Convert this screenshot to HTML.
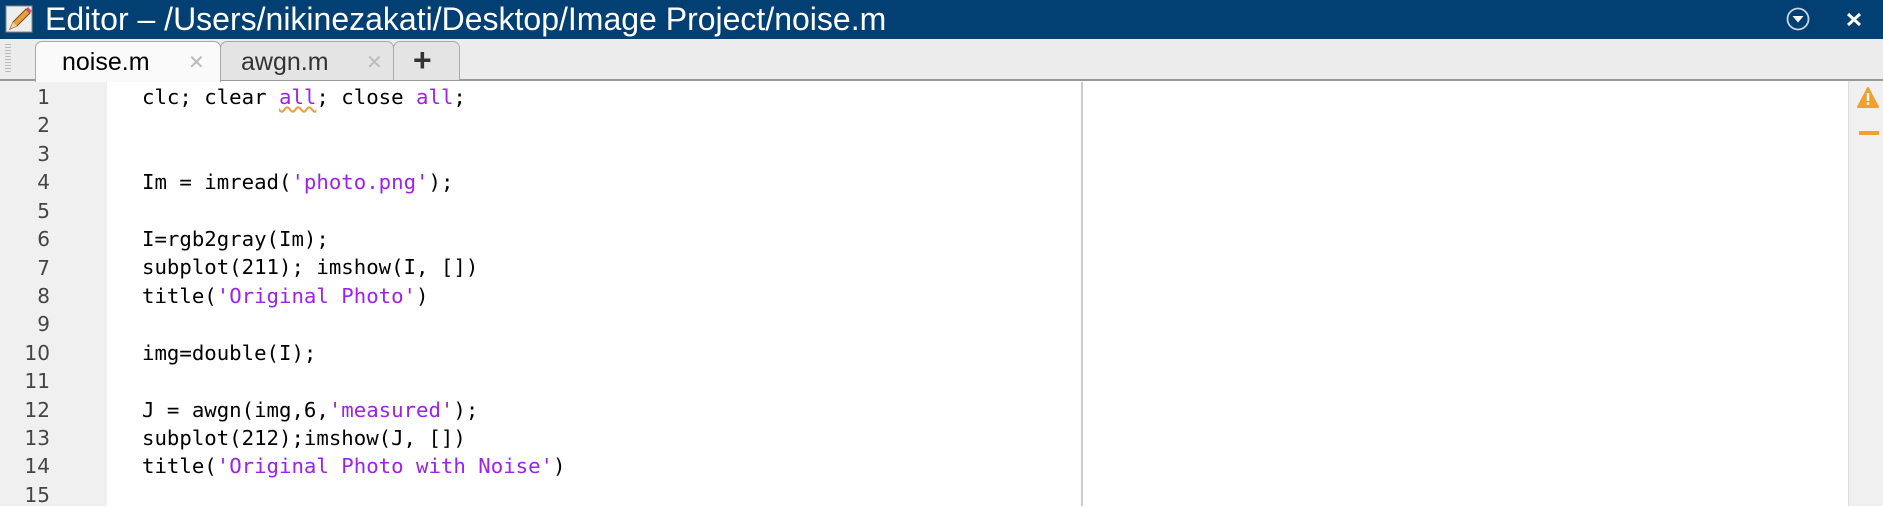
<!DOCTYPE html>
<html><head><meta charset="utf-8"><style>
*{margin:0;padding:0;box-sizing:border-box}
body{width:1883px;height:506px;overflow:hidden;background:#fff;position:relative;font-family:"Liberation Sans",sans-serif}
.title{position:absolute;left:0;top:0;width:1883px;height:39px;background:#023f72;color:#fff;font-size:32px;line-height:39px}
.title span{position:absolute;left:45px;top:0}
.tabbar{position:absolute;left:0;top:39px;width:1883px;height:42px;background:#ececec;border-bottom:2px solid #999}
.grip{position:absolute;left:5px;top:5px;width:6px;height:30px;background:repeating-linear-gradient(#bbb 0 1px,transparent 1px 3px)}
.tab{position:absolute;top:2px;height:39px;border:1px solid #aaa;border-bottom:none;border-radius:7px 7px 0 0;font-size:25px;line-height:36px;background:#e4e4e4;color:#333}
.tab.act{background:#fafafa;color:#000;height:41px;z-index:2}
.tab .x{position:absolute;top:0;color:#bbb;font-size:20px}
.gutter{position:absolute;left:0;top:81px;width:107px;height:425px;background:#f0f0f0}
.ln{position:absolute;left:0;width:50px;text-align:right;font-family:"DejaVu Sans",sans-serif;font-size:20px;color:#444}
.code{position:absolute;left:142px;font-family:"DejaVu Sans Mono",monospace;font-size:20.7px;color:#000;white-space:pre}
.s{color:#a020f0}
.vline{position:absolute;left:1081px;top:82px;width:2px;height:424px;background:#ccc}
.rbar{position:absolute;left:1848px;top:81px;width:35px;height:425px;background:#f0f0f0;border-left:1px solid #ddd}
</style></head><body>
<div class="title">
<svg style="position:absolute;left:5px;top:5px" width="28" height="28" viewBox="0 0 28 28"><rect x="1" y="1" width="26" height="26" fill="#eee" stroke="#888"/><path d="M5 24 L8 17 L21 4 L25 8 L12 21 Z" fill="#e8a040" stroke="#7a4a10"/><path d="M5 24 L8 17 L12 21Z" fill="#f4d0a0"/><path d="M21 4 L25 8 L27 6 L23 2Z" fill="#e05070"/></svg>
<span>Editor – /Users/nikinezakati/Desktop/Image Project/noise.m</span>
<svg style="position:absolute;left:1786px;top:7px" width="24" height="24" viewBox="0 0 24 24"><circle cx="12" cy="12" r="10.5" fill="none" stroke="#c8d4e0" stroke-width="1.8"/><path d="M6.5 9 L17.5 9 L12 15.5Z" fill="#fff"/></svg>
<svg style="position:absolute;left:1846px;top:12px" width="16" height="15" viewBox="0 0 16 15"><path d="M2 2 L14 13 M14 2 L2 13" stroke="#fff" stroke-width="3"/></svg>
</div>
<div class="tabbar">
<div class="grip"></div>
<div class="tab act" style="left:35px;width:186px"><span style="position:absolute;left:26px;top:2px">noise.m</span><span class="x" style="left:152px;top:3px">✕</span></div>
<div class="tab" style="left:220px;width:174px"><span style="position:absolute;left:20px;top:2px">awgn.m</span><span class="x" style="left:145px;top:3px">✕</span></div>
<div class="tab" style="left:393px;width:67px"><span style="position:absolute;left:19px;top:0;font-size:32px;font-weight:bold;color:#333">+</span></div>
</div>
<div class="gutter"></div>
<div class="vline"></div>
<div class="rbar">
<svg style="position:absolute;left:8px;top:6px" width="22" height="22" viewBox="0 0 22 22"><path d="M11 1 L21 20 L1 20Z" fill="#f0a030" stroke="#f0a030" stroke-linejoin="round" stroke-width="2"/><rect x="9.8" y="6" width="2.4" height="8" fill="#fff"/><rect x="9.8" y="15.5" width="2.4" height="2.4" fill="#fff"/></svg>
<div style="position:absolute;left:10px;top:50px;width:20px;height:4px;background:#f0a030"></div>
</div>
<div style="position:absolute;left:0;top:0">
<div class="ln" style="top:85px">1</div><div class="ln" style="top:113px">2</div><div class="ln" style="top:142px">3</div><div class="ln" style="top:170px">4</div><div class="ln" style="top:199px">5</div><div class="ln" style="top:227px">6</div><div class="ln" style="top:256px">7</div><div class="ln" style="top:284px">8</div><div class="ln" style="top:312px">9</div><div class="ln" style="top:341px">10</div><div class="ln" style="top:369px">11</div><div class="ln" style="top:398px">12</div><div class="ln" style="top:426px">13</div><div class="ln" style="top:454px">14</div><div class="ln" style="top:483px">15</div>
<div class="code" style="top:85px">clc; clear <span class="s" style="text-decoration:underline wavy #e8a040">all</span>; close <span class="s">all</span>;</div>
<div class="code" style="top:170px">Im = imread(<span class="s">'photo.png'</span>);</div>
<div class="code" style="top:227px">I=rgb2gray(Im);</div>
<div class="code" style="top:255px">subplot(211); imshow(I, [])</div>
<div class="code" style="top:284px">title(<span class="s">'Original Photo'</span>)</div>
<div class="code" style="top:341px">img=double(I);</div>
<div class="code" style="top:398px">J = awgn(img,6,<span class="s">'measured'</span>);</div>
<div class="code" style="top:426px">subplot(212);imshow(J, [])</div>
<div class="code" style="top:454px">title(<span class="s">'Original Photo with Noise'</span>)</div>
</div>
</body></html>
